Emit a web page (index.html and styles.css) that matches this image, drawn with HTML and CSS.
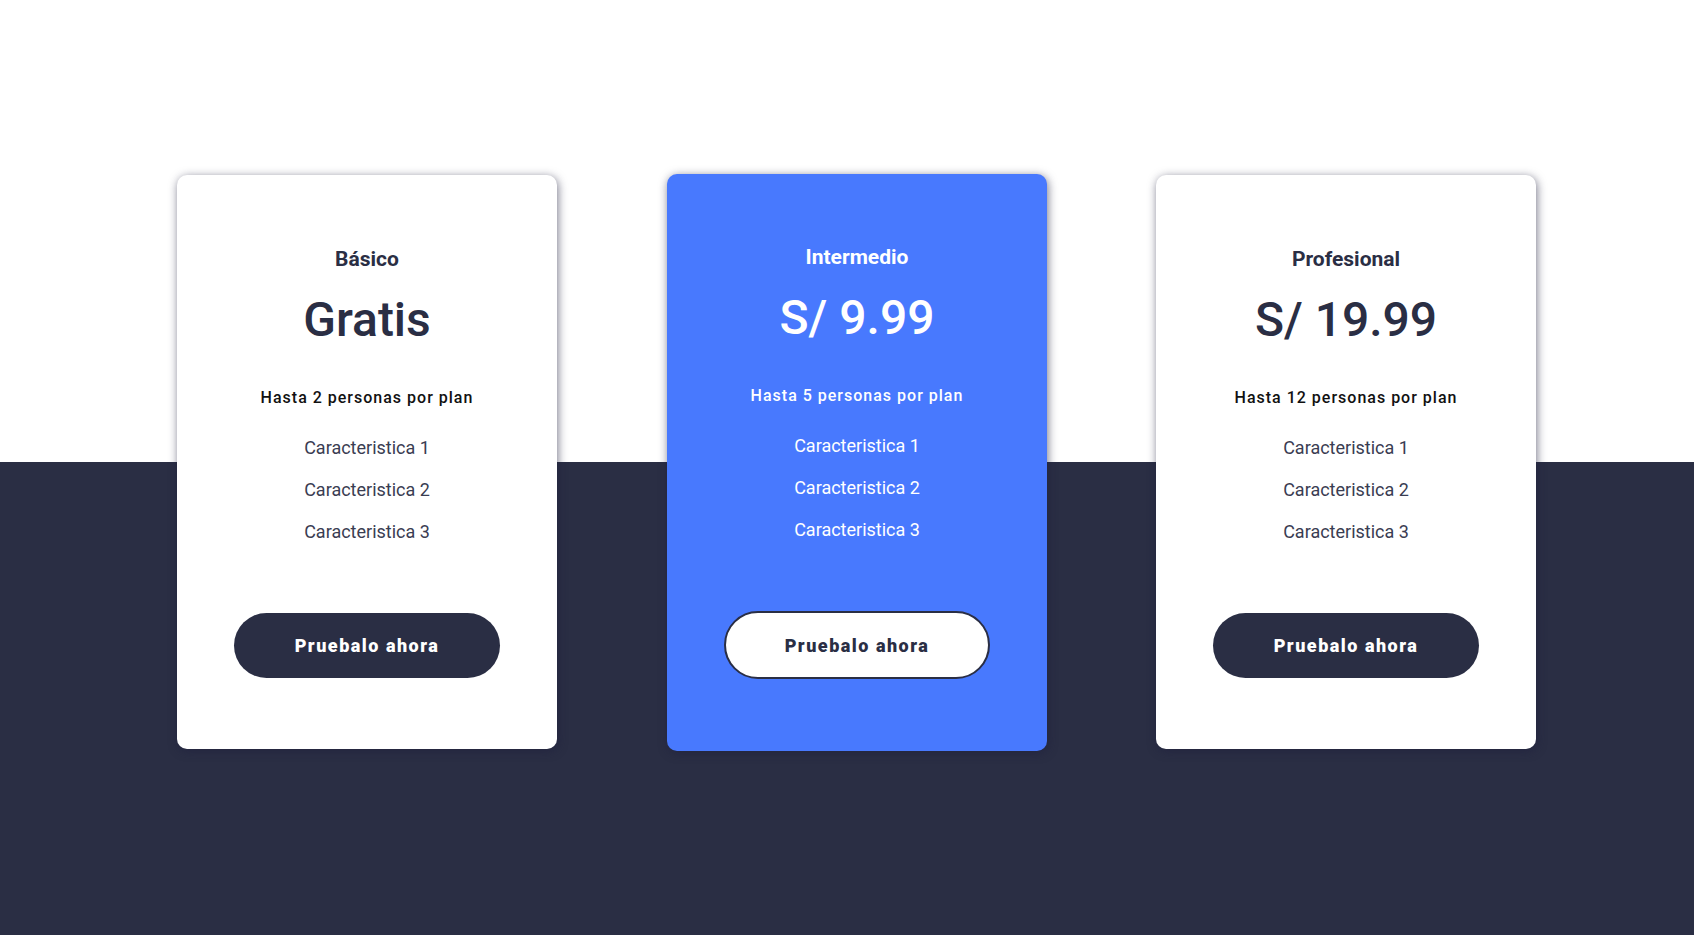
FILE: index.html
```html
<!DOCTYPE html>
<html lang="es">
<head>
<meta charset="utf-8">
<title>Planes</title>
<link rel="stylesheet" href="styles.css">
</head>
<body>
<section class="pricing">
  <div class="cards">
    <article class="card">
      <h3 class="plan">Básico</h3>
      <p class="price">Gratis</p>
      <p class="people">Hasta 2 personas por plan</p>
      <ul class="features">
        <li>Caracteristica 1</li>
        <li>Caracteristica 2</li>
        <li>Caracteristica 3</li>
      </ul>
      <button class="btn">Pruebalo ahora</button>
    </article>
    <article class="card card-featured">
      <h3 class="plan">Intermedio</h3>
      <p class="price">S/ 9.99</p>
      <p class="people">Hasta 5 personas por plan</p>
      <ul class="features">
        <li>Caracteristica 1</li>
        <li>Caracteristica 2</li>
        <li>Caracteristica 3</li>
      </ul>
      <button class="btn btn-light">Pruebalo ahora</button>
    </article>
    <article class="card">
      <h3 class="plan">Profesional</h3>
      <p class="price">S/ 19.99</p>
      <p class="people">Hasta 12 personas por plan</p>
      <ul class="features">
        <li>Caracteristica 1</li>
        <li>Caracteristica 2</li>
        <li>Caracteristica 3</li>
      </ul>
      <button class="btn">Pruebalo ahora</button>
    </article>
  </div>
</section>
</body>
</html>
```
FILE: styles.css
```css
* { box-sizing: border-box; }
html, body { margin: 0; padding: 0; }
body {
  font-family: Roboto, "Liberation Sans", Arial, sans-serif;
  color: #2a2e44;
}
.pricing {
  height: 935px;
  background: linear-gradient(to bottom, #ffffff 0, #ffffff 462px, #2a2e44 462px, #2a2e44 100%);
  padding-top: 175px;
}
.cards {
  display: flex;
  align-items: flex-start;
  gap: 110px;
  padding-left: 177px;
}
.card {
  width: 380px;
  background: #fff;
  border-radius: 10px;
  box-shadow: 1px 2px 10px rgba(30, 30, 60, 0.6);
  padding: 72px 0 71px;
  display: flex;
  flex-direction: column;
  align-items: center;
  text-align: center;
}
.card-featured {
  background: #4879fe;
  color: #fff;
  margin: -1px -1px 0 0;
  padding: 71px 0 72px;
}
.plan {
  margin: 0;
  font-size: 21px;
  line-height: 24px;
  font-weight: 700;
}
.price {
  margin: 21px 0 0;
  font-size: 48px;
  line-height: 56px;
  font-weight: 500;
}
.people {
  margin: 40px 0 0;
  font-size: 16px;
  line-height: 20px;
  font-weight: 500;
  letter-spacing: 1px;
  color: #111;
}
.card-featured .people { color: #fff; }
.features {
  list-style: none;
  margin: 19px 0 0;
  padding: 0;
}
.features li {
  font-size: 18px;
  line-height: 42px;
  font-weight: 400;
  color: #3a3d52;
}
.card-featured .features li { color: #fff; }
.btn {
  margin-top: 60px;
  width: 266px;
  height: 65px;
  border: none;
  border-radius: 40px;
  background: #2a2e44;
  color: #fff;
  font-family: Roboto, "Liberation Sans", Arial, sans-serif;
  font-size: 18px;
  font-weight: 900;
  letter-spacing: 1.5px;
  cursor: pointer;
}
.btn-light {
  height: 68px;
  background: #fff;
  color: #2a2e44;
  border: 2px solid #2a2e44;
}
```
